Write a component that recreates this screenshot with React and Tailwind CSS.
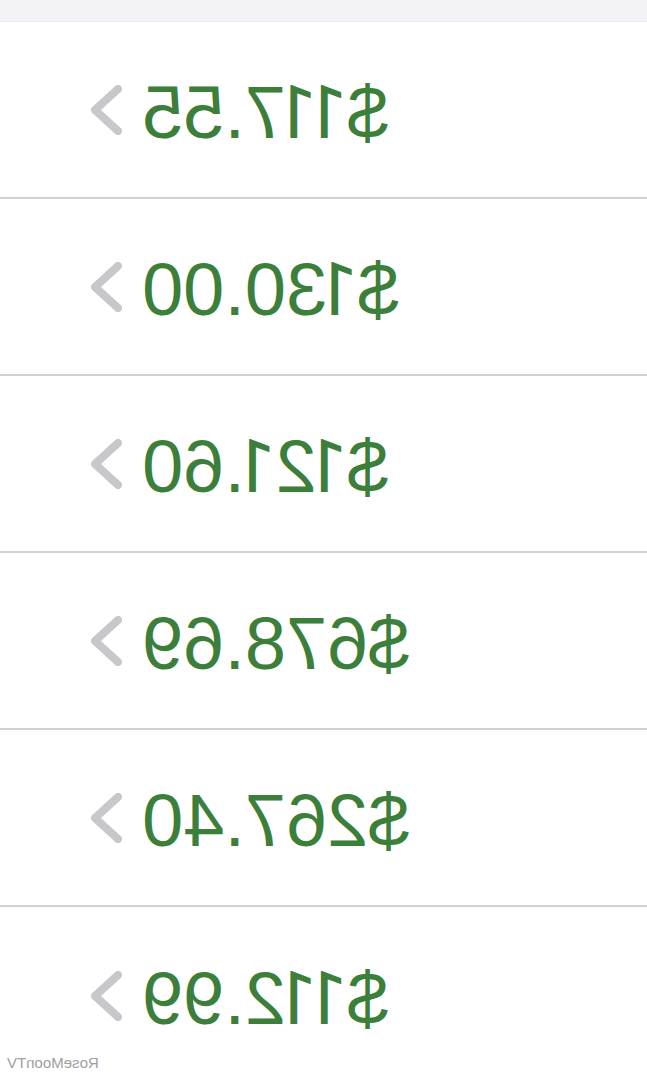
import React from "react";

const amounts = ["$117.55", "$130.00", "$121.60", "$678.69", "$267.40", "$112.99"];

function Chevron() {
  return (
    <svg width="32" height="50" viewBox="0 0 32 50" className="shrink-0">
      <path d="M4 4 L27 25 L4 46" fill="none" stroke="#c7c7cc" strokeWidth="8" strokeLinecap="round" strokeLinejoin="round" />
    </svg>
  );
}

function Amount({ value }) {
  return (
    <span className="text-[74px] leading-none text-[#3b7f3a] mr-[20px] pt-[6px] whitespace-nowrap">
      {value.split("").map((c, i) =>
        c === "1" ? (
          <span key={i} className="tracking-[-11px]" style={{ fontFamily: "Roboto, sans-serif" }}>1</span>
        ) : (
          <span key={i}>{c}</span>
        )
      )}
    </span>
  );
}

export default function App() {
  return (
    <div className="relative w-[647px] h-[1080px] overflow-hidden bg-white -scale-x-100" style={{ fontFamily: '"Liberation Sans", Arial, sans-serif' }}>
      <div className="h-[22px] bg-[#f2f2f7] border-b border-[#ececf0]" />
      {amounts.map((a, i) => (
        <div key={i} className={`flex items-center justify-end pr-[90px] h-[177px] ${i < amounts.length - 1 ? "border-b-2 border-[#d1d1d1]" : ""}`}>
          <Amount value={a} />
          <Chevron />
        </div>
      ))}
      <div className="absolute right-[7px] top-[1052px] text-[15px] text-[#a0a0a0]">RoseMoonTV</div>
    </div>
  );
}
